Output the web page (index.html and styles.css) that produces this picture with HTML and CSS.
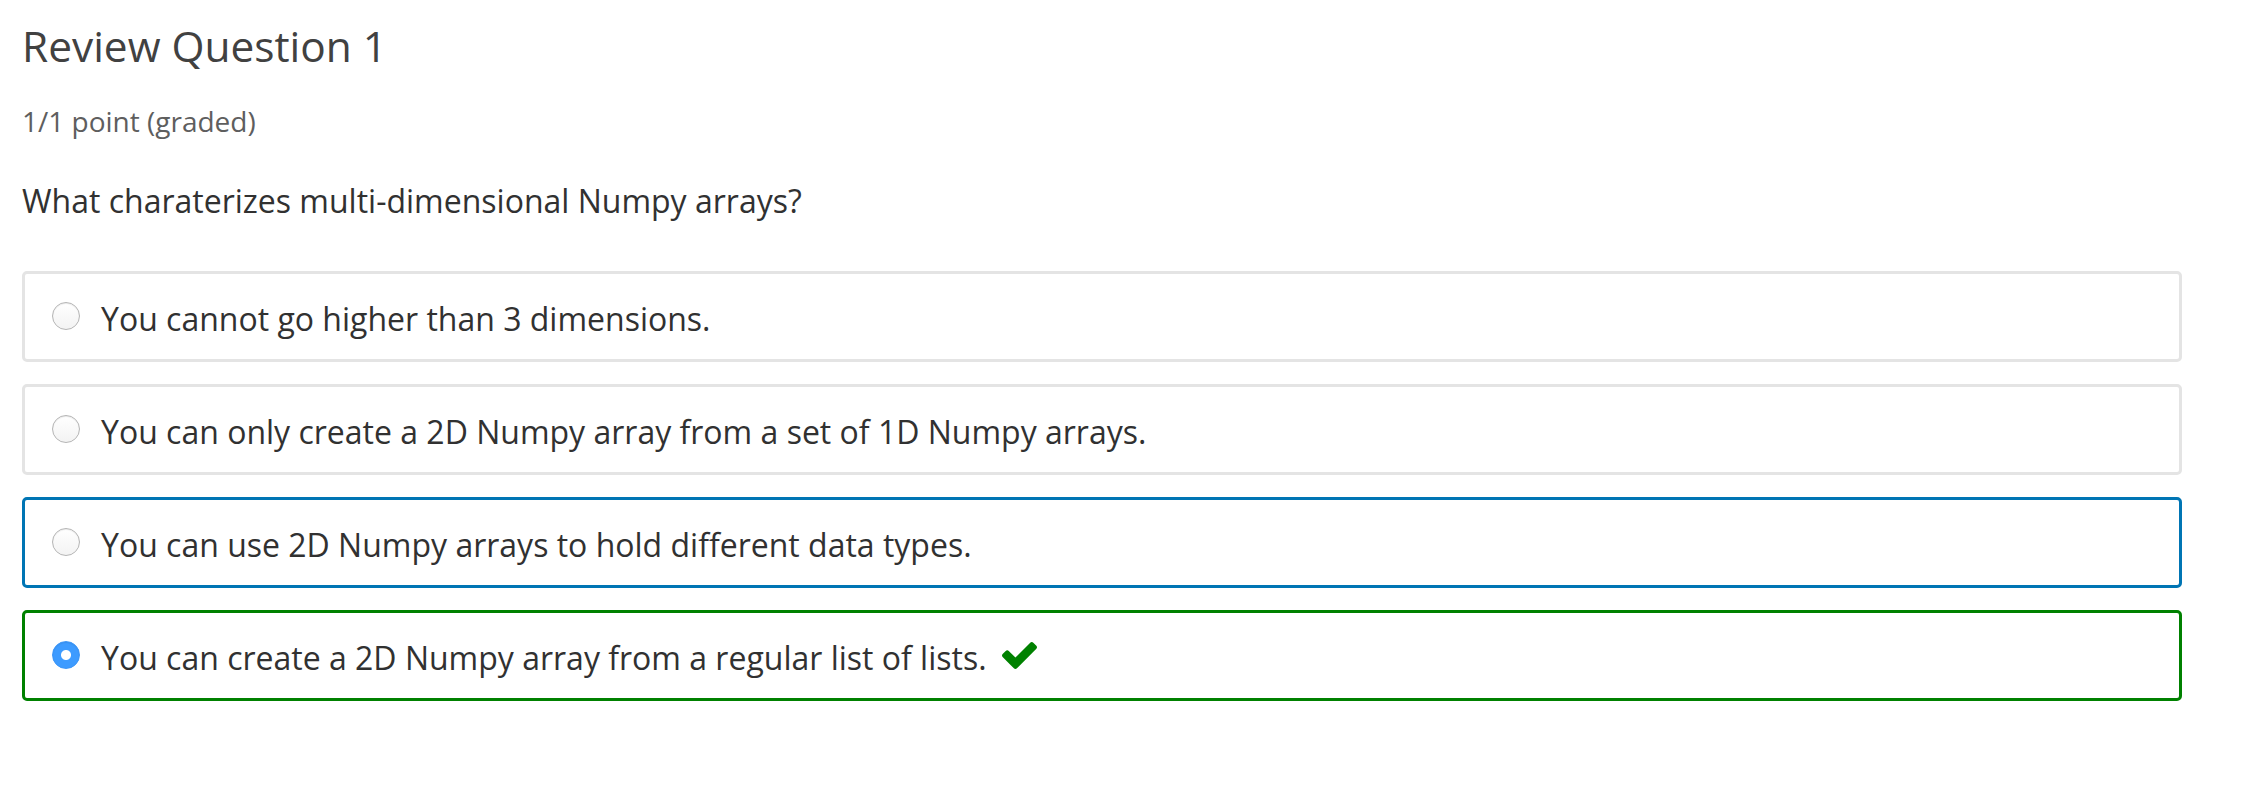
FILE: index.html
```html
<!DOCTYPE html>
<html lang="en">
<head>
<meta charset="utf-8">
<title>Review Question 1</title>
<link rel="stylesheet" href="styles.css">
</head>
<body>
<div class="problem">
  <h2 class="title">Review Question 1</h2>
  <div class="grade">1/1 point (graded)</div>
  <p class="prompt">What charaterizes multi-dimensional Numpy arrays?</p>
  <div class="choices">
    <label class="choice">
      <input type="radio" name="q1" class="radio">
      <span class="choice-text">You cannot go higher than 3 dimensions.</span>
    </label>
    <label class="choice">
      <input type="radio" name="q1" class="radio">
      <span class="choice-text">You can only create a 2D Numpy array from a set of 1D Numpy arrays.</span>
    </label>
    <label class="choice choice-focus">
      <input type="radio" name="q1" class="radio">
      <span class="choice-text">You can use 2D Numpy arrays to hold different data types.</span>
    </label>
    <label class="choice choice-correct">
      <input type="radio" name="q1" class="radio" checked>
      <span class="choice-text">You can create a 2D Numpy array from a regular list of lists.</span>
      <svg class="check" viewBox="121 334 1550 1188" width="35" height="27" aria-hidden="true"><path fill="#008100" d="M1671 566q0 40-28 68l-724 724-136 136q-28 28-68 28t-68-28l-136-136-362-362q-28-28-28-68t28-68l136-136q28-28 68-28t68 28l294 295 656-657q28-28 68-28t68 28l136 136q28 28 28 68z"/></svg>
    </label>
  </div>
</div>
</body>
</html>
```
FILE: styles.css
```css
* { box-sizing: border-box; }
body {
  margin: 0;
  background: #fff;
  font-family: "Open Sans", "Noto Sans", sans-serif;
  color: #313131;
}
.problem {
  padding: 21px 0 0 22px;
  width: 2182px;
}
.title {
  margin: 0;
  font-size: 42.4px;
  line-height: 1.2;
  font-weight: 400;
  color: #414141;
}
.grade {
  margin-top: 30px;
  font-size: 28px;
  color: #5e5e5e;
}
.prompt {
  margin: 39px 0 0;
  font-size: 32px;
}
.choices {
  margin-top: 49px;
  display: flex;
  flex-direction: column;
  gap: 22px;
}
.choice {
  display: flex;
  align-items: center;
  height: 91px;
  padding-left: 27px;
  border: 3px solid #e4e4e4;
  border-radius: 5px;
  font-size: 32px;
}
.choice-focus { border-color: #0075b4; }
.choice-correct { border-color: #008100; }
.choice-text { padding-top: 4px; }
.radio {
  appearance: none;
  -webkit-appearance: none;
  margin: 0 21px 0 0;
  width: 28px;
  height: 28px;
  border-radius: 50%;
  border: 1px solid #b5b5b5;
  background: linear-gradient(#fff, #f3f3f3);
  box-shadow: inset 0 1px 1px rgba(0,0,0,0.08);
  flex: none;
}
.radio:checked {
  border-color: #3b95f7;
  background: radial-gradient(circle, #fff 0 4.5px, #3d9bff 5.5px);
}
.check { margin-left: 15px; flex: none; }
```
